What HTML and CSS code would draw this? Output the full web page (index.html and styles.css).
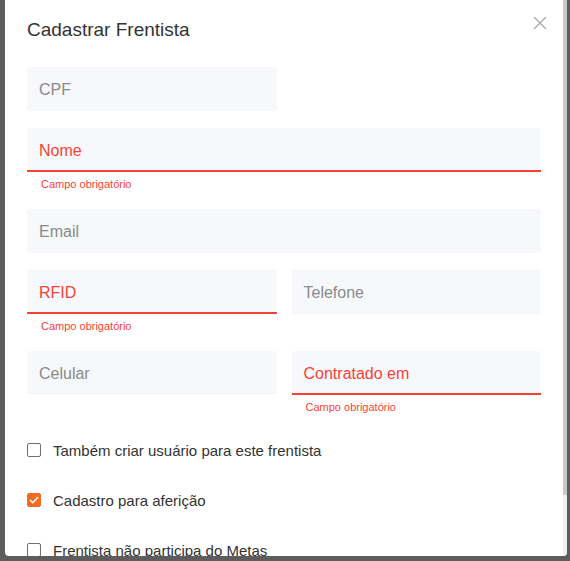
FILE: index.html
```html
<!DOCTYPE html>
<html lang="pt-BR">
<head>
<meta charset="utf-8">
<title>Cadastrar Frentista</title>
<link rel="stylesheet" href="styles.css">
</head>
<body>
<div class="backdrop">
  <div class="modal">
    <div class="modal-inner">
      <div class="modal-header">
        <h2 class="modal-title">Cadastrar Frentista</h2>
        <button class="close" aria-label="Fechar">
          <svg width="14" height="14" viewBox="0 0 14 14"><path d="M1 1L13 13M13 1L1 13" stroke="#b3b3b3" stroke-width="1.6" fill="none"/></svg>
        </button>
      </div>
      <form class="form">
        <div class="row half">
          <div class="field"><div class="input"><span class="label">CPF</span></div></div>
        </div>
        <div class="row">
          <div class="field error"><div class="input"><span class="label">Nome</span></div><div class="helper">Campo obrigatório</div></div>
        </div>
        <div class="row">
          <div class="field"><div class="input"><span class="label">Email</span></div></div>
        </div>
        <div class="row two">
          <div class="field error"><div class="input"><span class="label">RFID</span></div><div class="helper">Campo obrigatório</div></div>
          <div class="field"><div class="input"><span class="label">Telefone</span></div></div>
        </div>
        <div class="row two">
          <div class="field"><div class="input"><span class="label">Celular</span></div></div>
          <div class="field error"><div class="input"><span class="label">Contratado em</span></div><div class="helper">Campo obrigatório</div></div>
        </div>
        <div class="checks">
          <label class="check"><span class="box"></span>Também criar usuário para este frentista</label>
          <label class="check"><span class="box checked"><svg width="10" height="8" viewBox="0 0 10 8"><path d="M1 4L3.8 6.6L9 1.2" stroke="#fff" stroke-width="1.6" fill="none"/></svg></span>Cadastro para aferição</label>
          <label class="check"><span class="box"></span>Frentista não participa do Metas</label>
        </div>
      </form>
    </div>
    <div class="scrollbar"><div class="thumb"></div></div>
  </div>
</div>
</body>
</html>
```

FILE: styles.css
```css
* { box-sizing: border-box; }
html, body { margin: 0; padding: 0; }
body {
  background: #5d5d5d;
  font-family: "Liberation Sans", Arial, sans-serif;
  width: 570px;
  height: 561px;
  overflow: hidden;
}
.backdrop {
  padding-left: 5px;
  height: 561px;
}
.modal {
  width: 562px;
  height: 556px;
  background: #fff;
  border-radius: 0 0 4px 4px;
  overflow: hidden;
  display: flex;
}
.modal-inner {
  width: 558px;
  flex: none;
  padding: 16px 22px 0 22px;
}
.scrollbar {
  width: 4px;
  flex: none;
  background: #f1f1f1;
}
.thumb {
  height: 495px;
  background: #c8c8c8;
}
.modal-header {
  display: flex;
  justify-content: space-between;
  align-items: flex-start;
  height: 51px;
}
.modal-title {
  margin: 0;
  font-weight: 400;
  font-size: 19px;
  line-height: 28px;
  color: #333;
}
.close {
  border: 0;
  background: none;
  padding: 0;
  margin: 0 -6px 0 0;
  width: 14px;
  height: 14px;
  display: flex;
  cursor: pointer;
}
.form { display: flex; flex-direction: column; }
.row { display: flex; gap: 15px; margin-bottom: 17px; }
.row.half .field { width: 250px; flex: none; }
.row.two .field { flex: 1; }
.field { flex: 1; display: flex; flex-direction: column; }
.input {
  height: 44px;
  background: #f7f8fc;
  border-radius: 3px;
  display: flex;
  align-items: center;
  padding: 2px 12px 0;
}
.label { font-size: 16px; color: #8a8a8a; }
.field.error .input {
  border-bottom: 2px solid #f44336;
  border-radius: 3px 3px 0 0;
  padding-top: 4px;
}
.field.error .label { color: #f44336; }
.helper {
  font-size: 11px;
  color: #f44336;
  padding-left: 14px;
  line-height: 14px;
  margin-top: 5px;
  margin-bottom: -19px;
  height: 14px;
}
.row:has(.error) { margin-bottom: 37px; }
.checks { display: flex; flex-direction: column; margin-top: -7px; }
.check {
  display: flex;
  align-items: center;
  gap: 12px;
  font-size: 15px;
  color: #333;
  height: 50px;
  flex: none;
}
.box {
  width: 14px;
  height: 14px;
  border: 1.5px solid #6e6e6e;
  border-radius: 2px;
  display: flex;
  align-items: center;
  justify-content: center;
  flex: none;
}
.box.checked { background: #f26b1f; border-color: #f26b1f; }
```
